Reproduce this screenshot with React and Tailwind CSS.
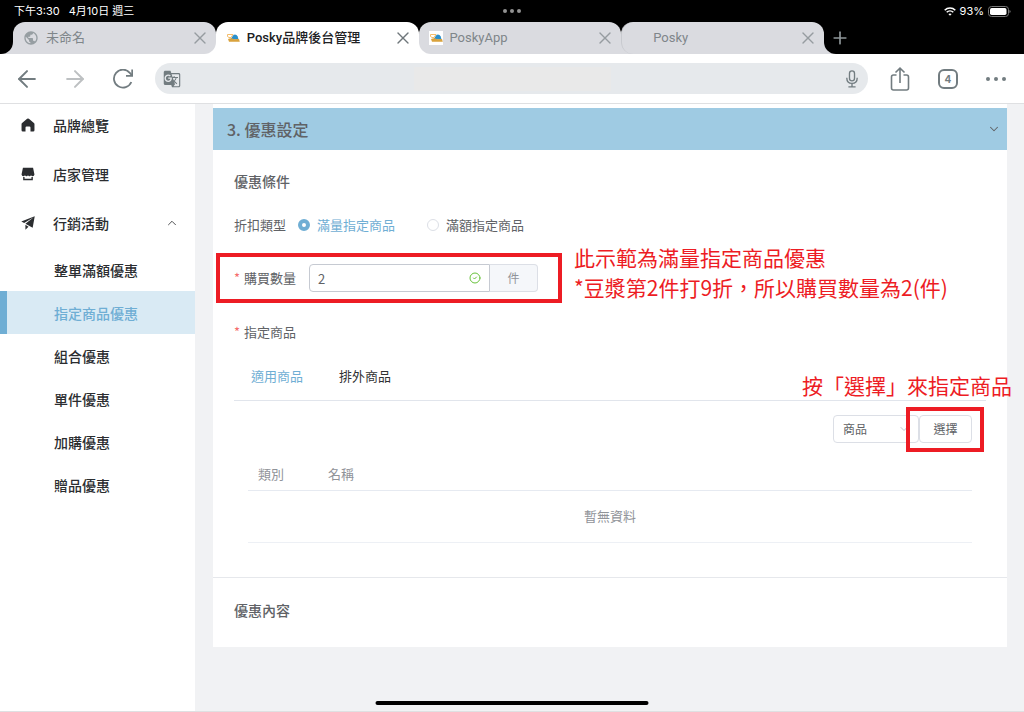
import { useState } from "react";
import { MdGTranslate, MdPublic } from "react-icons/md";
import { ArrowLeft, ArrowRight, ChevronDown, ChevronUp, CircleCheck, Plus, X } from "lucide-react";

const TABS = [
  { title: "未命名", icon: "globe", look: "text-[#7f868a] rounded-t-xl rounded-br-xl bg-[#dadbe0]", back: "to-white" },
  { title: "Posky品牌後台管理", icon: "posky", look: "bg-white text-[#202124] font-medium rounded-t-xl", back: "to-white", active: true },
  { title: "PoskyApp", icon: "posky-boxed", look: "bg-[#dadbe0] text-[#7f868a] rounded-t-xl rounded-bl-xl", back: "to-white" },
  { title: "Posky", icon: "none", look: "bg-[#dadbe0] text-[#7f868a] rounded-t-xl rounded-bl-xl border-l border-[#c8cacf]", back: "to-[#dadbe0]" },
];

const PROMOTIONS = ["整單滿額優惠", "指定商品優惠", "組合優惠", "單件優惠", "加購優惠", "贈品優惠"];

function PoskyLogo() {
  return (
    <svg viewBox="0 0 14 10" className="h-[10px] w-[14px]" aria-hidden="true">
      <path d="M1.500 1.500H7L5 4.500H3L1.500 3.500z" fill="#fff" stroke="#f5bd6a" strokeWidth="1" />
      <path d="M5 5.500 7.500 2q1.300-1 3 0l1.200 1.500.8 3H5z" fill="#2a8fcb" />
      <path d="M2 6q2-1 4-.7L8 6.300l5-.3.800 2.700H3z" fill="#d9a23d" />
    </svg>
  );
}

function TabIcon({ kind }) {
  if (kind === "globe") return <MdPublic className="h-4 w-4 shrink-0 text-[#969ea2]" />;
  if (kind === "none") return <span className="h-[14px] w-[14px] shrink-0" />;
  return (
    <span className={kind === "posky-boxed" ? "flex h-[14px] w-[14px] shrink-0 items-center bg-white" : "flex h-[14px] w-[14px] shrink-0 items-center"}>
      <PoskyLogo />
    </span>
  );
}

function StatusBar() {
  return (
    <div className="grid h-[22px] shrink-0 grid-cols-3 items-center bg-black pl-[14px] pr-[13px] text-[11px] leading-none text-white">
      <div className="flex gap-[9px]">
        <span>下午3:30</span>
        <span>4月10日 週三</span>
      </div>
      <div className="flex justify-center gap-[3px]">
        <span className="h-1 w-1 rounded-full bg-[#929292]" />
        <span className="h-1 w-1 rounded-full bg-[#929292]" />
        <span className="h-1 w-1 rounded-full bg-[#929292]" />
      </div>
      <div className="flex items-center justify-end gap-1">
        <svg viewBox="0 0 12 9" className="h-[9px] w-3" fill="none" stroke="currentColor" strokeWidth="1.600" aria-hidden="true">
          <path d="M.7 3.200a7.600 7.600 0 0 1 10.600 0" />
          <path d="M2.700 5.300a4.700 4.700 0 0 1 6.600 0" />
          <path d="M6 8.800 4.400 7.100a2.400 2.400 0 0 1 3.200 0z" fill="currentColor" stroke="none" />
        </svg>
        <span>93%</span>
        <svg viewBox="0 0 23 11" className="h-[11px] w-[23px]" aria-hidden="true">
          <rect x=".5" y=".5" width="20" height="10" rx="3" fill="none" stroke="#777" />
          <rect x="2" y="2" width="16.500" height="7" rx="1.700" fill="#fff" />
          <path d="M21.500 4v3q1-.4 1-1.500t-1-1.500" fill="#888" />
        </svg>
      </div>
    </div>
  );
}

function TabStrip() {
  return (
    <div className="flex h-8 shrink-0 bg-black font-['Roboto','Noto_Sans_CJK_TC',sans-serif] text-[13px]">
      <div className="w-[13px] bg-[#dadbe0]">
        <div className="h-full rounded-br-xl bg-black" />
      </div>
      {TABS.map((tab) => (
        <div key={tab.title} className={`min-w-0 flex-1 bg-linear-to-b from-black from-50% to-50% ${tab.back}`}>
          <div className={`flex h-full items-center gap-[7px] pl-[10px] pr-2 ${tab.look}`}>
            <TabIcon kind={tab.icon} />
            <span className="min-w-0 flex-1 truncate">{tab.title}</span>
            <button type="button" aria-label={`關閉 ${tab.title}`}>
              <X className={tab.active ? "h-4 w-4 scale-125 text-[#6f777b]" : "h-4 w-4 scale-125 text-[#969ca0]"} strokeWidth={1.6} />
            </button>
          </div>
        </div>
      ))}
      <div className="w-[200px] bg-[#dadbe0]">
        <div className="flex h-full items-center rounded-bl-xl bg-black pl-[6px]">
          <button type="button" aria-label="新分頁">
            <Plus className="h-5 w-5 text-[#8e9699]" strokeWidth={2} />
          </button>
        </div>
      </div>
    </div>
  );
}

function Toolbar() {
  return (
    <div className="flex h-[50px] shrink-0 items-center gap-[22px] border-b border-[#dfe0e2] bg-white pl-[17px] pr-[18px] text-[#727c80]">
      <div className="flex items-center gap-7">
        <button type="button" aria-label="上一頁">
          <ArrowLeft className="h-5 w-5 scale-135" strokeWidth={1.8} />
        </button>
        <button type="button" aria-label="下一頁" className="text-[#bdc0c2]">
          <ArrowRight className="h-5 w-5 scale-135" strokeWidth={1.8} />
        </button>
        <button type="button" aria-label="重新載入">
          <svg viewBox="0 0 20 20" className="h-5 w-5" fill="none" stroke="currentColor" strokeWidth="1.800" aria-hidden="true">
            <path d="M18.300 13a9 9 0 1 1-1.500-9.200L19 6.300" />
            <path d="M19.200.5v6.300H13" />
          </svg>
        </button>
      </div>
      <div className="flex h-[31px] min-w-0 flex-1 items-center justify-between rounded-full bg-[#e6e9ec] px-2">
        <MdGTranslate className="h-[18px] w-[18px]" />
        <input aria-label="網址" className="h-6 w-[197px] bg-[#e9e9e9] outline-none" />
        <button type="button" aria-label="語音搜尋">
          <svg viewBox="0 0 16 20" className="h-[18px] w-4" fill="none" stroke="currentColor" strokeWidth="1.500" aria-hidden="true">
            <rect x="5.200" y="1" width="5.600" height="11" rx="2.800" />
            <path d="M2.200 8.500c0 4 2.300 6.300 5.800 6.300s5.800-2.300 5.800-6.300M8 15v3.500M4 18.700h8" />
          </svg>
        </button>
      </div>
      <div className="flex items-center gap-7">
        <button type="button" aria-label="分享">
          <svg viewBox="0 0 20 24" className="h-6 w-5" fill="none" stroke="currentColor" strokeWidth="1.600" aria-hidden="true">
            <path d="M6.500 8H3.500Q1.500 8 1.500 10v11q0 2 2 2h13q2 0 2-2V10q0-2-2-2h-3M10 16V1.500M5.500 5.500 10 1.200l4.500 4.300" />
          </svg>
        </button>
        <button type="button" aria-label="分頁" className="flex h-5 w-5 items-center justify-center rounded-md border-2 border-current text-[10px] font-bold leading-none">
          4
        </button>
        <button type="button" aria-label="更多" className="flex w-5 justify-between">
          <span className="h-1 w-1 rounded-full bg-current" />
          <span className="h-1 w-1 rounded-full bg-current" />
          <span className="h-1 w-1 rounded-full bg-current" />
        </button>
      </div>
    </div>
  );
}

function MainLink({ icon, children, open }) {
  return (
    <a href="#" className="flex h-11 items-center pl-[21px] pr-4">
      <span className="flex w-8 items-center">{icon}</span>
      <span className="flex-1">{children}</span>
      {open && <ChevronUp className="h-[14px] w-[14px]" strokeWidth={1.4} />}
    </a>
  );
}

function Sidebar() {
  return (
    <nav className="w-[195px] shrink-0 bg-white text-sm font-medium text-[#2b2d30]">
      <div className="-mt-px flex flex-col gap-[5px]">
        <MainLink
          icon={
            <svg viewBox="0 0 13 13" className="h-[14px] w-[14px]" fill="currentColor" aria-hidden="true">
              <path d="M5.700.7a1.300 1.300 0 0 1 1.600 0l4.700 3.900q.5.400.5 1v5.700q0 1.200-1.200 1.200H8.800V8.900q0-1-1-1H5.200q-1 0-1 1v3.600H1.700q-1.200 0-1.200-1.200V5.600q0-.6.500-1z" />
            </svg>
          }
        >
          品牌總覽
        </MainLink>
        <MainLink
          icon={
            <svg viewBox="0 0 13 13" className="h-[14px] w-[14px]" fill="currentColor" aria-hidden="true">
              <path d="M1.800.8h9.400l1.300 6.200q-.3 1.500-1.600 1.500-1.100 0-1.600-.8-.5.800-1.400.8-1 0-1.400-.8-.5.800-1.400.8t-1.400-.8q-.6.800-1.600.8Q.8 8.500.5 7z" />
              <path d="M2 9.300h1.300v1.500h6.400V9.300H11v2.900H2z" />
            </svg>
          }
        >
          店家管理
        </MainLink>
        <MainLink
          icon={
            <svg viewBox="48 112 864 864" className="h-[14px] w-[14px]" fill="currentColor" aria-hidden="true">
              <path d="m64 448 832-320-128 704-446.080-243.328L832 192 242.816 545.472zM320 960V657.024L512 768z" />
            </svg>
          }
          open
        >
          行銷活動
        </MainLink>
      </div>
      <ul className="mt-[3px]">
        {PROMOTIONS.map((name) => (
          <li key={name}>
            <a
              href="#"
              className={
                name === "指定商品優惠"
                  ? "flex h-[43px] items-center border-l-[7px] border-[#6faed4] bg-[#d9eaf4] pl-[47px] text-[#6faed4]"
                  : "flex h-[43px] items-center pl-[54px]"
              }
            >
              {name}
            </a>
          </li>
        ))}
      </ul>
    </nav>
  );
}

function TypeRadio({ value, current, onPick }) {
  const on = value === current;
  return (
    <label className={on ? "flex items-center gap-[7px] text-[#6faed4]" : "flex items-center gap-[7px]"}>
      <input
        type="radio"
        name="discount-type"
        checked={on}
        onChange={() => onPick(value)}
        className="h-3 w-3 appearance-none rounded-full border border-[#dcdfe6] bg-white checked:border-4 checked:border-[#6faed4]"
      />
      {value}
    </label>
  );
}

function DiscountCard() {
  const [type, setType] = useState("滿量指定商品");
  const [quantity, setQuantity] = useState("2");

  return (
    <section className="border-t-4 border-white bg-white text-[13px] leading-5 text-[#606266]">
      <h2>
        <button type="button" className="flex h-[42px] w-full items-center justify-between bg-[#9fcbe3] pl-[14px] pr-[6px] text-base font-medium">
          3. 優惠設定
          <ChevronDown className="h-[14px] w-[14px]" strokeWidth={1.8} />
        </button>
      </h2>

      <div className="border-b border-[#e6e8ec] px-[21px] pb-[34px] pt-[21px]">
        <h3 className="text-sm font-medium">優惠條件</h3>

        <div className="mt-6 flex items-center" role="radiogroup" aria-label="折扣類型">
          <span className="mr-3">折扣類型</span>
          <TypeRadio value="滿量指定商品" current={type} onPick={setType} />
          <span className="w-8" />
          <TypeRadio value="滿額指定商品" current={type} onPick={setType} />
        </div>

        {/* Quantity */}
        <div className="relative mt-[29px] flex h-7 items-center">
          <label htmlFor="quantity" className="w-[75px]">
            <span className="mr-1 text-[#f56c6c]">*</span>購買數量
          </label>
          <div className="relative">
            <input
              id="quantity"
              value={quantity}
              onChange={(e) => setQuantity(e.target.value)}
              className="h-7 w-[181px] rounded-l border border-[#c6cad2] bg-white pl-2 pr-8 outline-none"
            />
            <CircleCheck className="absolute right-[9px] top-2 h-3 w-3 text-[#67c23a]" strokeWidth={2} />
          </div>
          <span className="flex h-7 w-12 items-center justify-center rounded-r border border-l-0 border-[#dcdfe6] bg-[#f5f7fa] text-xs text-[#909399]">件</span>
          <div className="pointer-events-none absolute -left-[18px] -top-[11px] h-[50px] w-[346px] border-4 border-[#ed1c24]" />
          <p className="absolute -top-[22px] left-[340px] whitespace-nowrap text-[21px] leading-[30px] text-[#ed1c24]">
            此示範為滿量指定商品優惠
            <br />
            *豆漿第2件打9折，所以購買數量為2(件)
          </p>
        </div>

        {/* Products */}
        <p className="mt-[30px]">
          <span className="mr-1 text-[#f56c6c]">*</span>指定商品
        </p>
        <div className="mt-[9px] flex h-[50px] gap-9 border-b border-[#e1e5ec] px-[17px]" role="tablist">
          <button type="button" role="tab" aria-selected="true" className="text-[#6faed4]">適用商品</button>
          <button type="button" role="tab" aria-selected="false" className="text-[#303133]">排外商品</button>
        </div>

        <div className="px-[14px] pt-[14px]">
          <div className="flex justify-end text-xs">
            <div className="relative">
              <select aria-label="類型" className="h-7 w-[86px] appearance-none rounded border border-[#dcdfe6] bg-white px-[9px]">
                <option>商品</option>
              </select>
              <ChevronDown className="pointer-events-none absolute right-[9px] top-2 h-3 w-3 text-[#c0c4cc]" strokeWidth={2} />
            </div>
            <div className="relative">
              <button type="button" className="h-7 w-[53px] rounded border border-[#dcdfe6] bg-white">選擇</button>
              <div className="pointer-events-none absolute -right-3 -top-2 h-[45px] w-[78px] border-4 border-[#ed1c24]" />
              <p className="absolute -right-10 -top-[45px] whitespace-nowrap text-[21px] leading-[30px] text-[#ed1c24]">按「選擇」來指定商品</p>
            </div>
          </div>

          <table className="mt-[15px] w-full border-collapse text-left text-[#909399]">
            <thead>
              <tr className="h-8 border-b border-[#e6eaf1]">
                <th className="w-[70px] pl-[10px] font-normal">類別</th>
                <th className="pl-[10px] font-normal">名稱</th>
              </tr>
            </thead>
            <tbody>
              <tr className="h-[52px] border-b border-[#edf0f5]">
                <td colSpan={2} className="text-center">暫無資料</td>
              </tr>
            </tbody>
          </table>
        </div>
      </div>

      <h3 className="px-[21px] pb-[27px] pt-[22px] text-sm font-medium">優惠內容</h3>
    </section>
  );
}

export default function App() {
  return (
    <div className="relative flex h-screen flex-col overflow-hidden bg-white font-['Inter','Noto_Sans_CJK_TC',sans-serif]">
      <StatusBar />
      <TabStrip />
      <Toolbar />
      <div className="flex min-h-0 flex-1 border-b border-[#dfe0e2] font-['Noto_Sans_CJK_TC',sans-serif]">
        <Sidebar />
        <main className="min-w-0 flex-1 bg-[#f1f2f4] pl-[18px] pr-[17px]">
          <DiscountCard />
        </main>
      </div>
      <div className="absolute bottom-[7px] left-1/2 h-1 w-[273px] -translate-x-1/2 rounded-full bg-black" />
    </div>
  );
}
